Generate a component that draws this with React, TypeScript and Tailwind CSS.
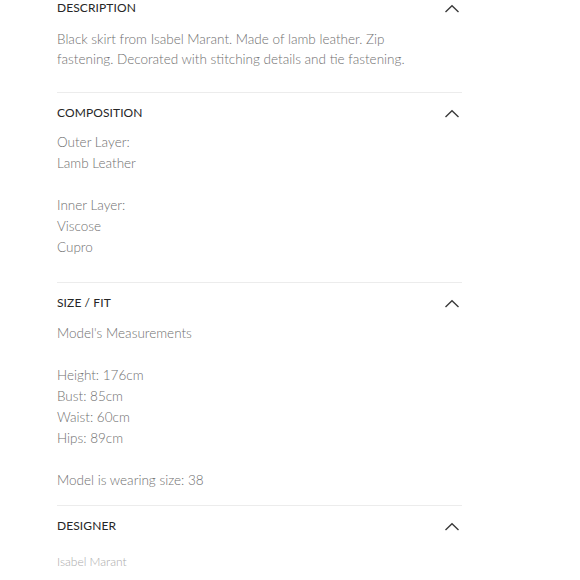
import React from "react";

function Chevron() {
  return (
    <svg width="16" height="9" viewBox="0 0 16 9" fill="none" className="shrink-0">
      <path d="M1.5 8 L8 1.8 L14.5 8" stroke="#3a3a3a" strokeWidth="1.4" />
    </svg>
  );
}

function Heading({ title }: { title: string }) {
  return (
    <div className="flex items-center justify-between h-[14px]">
      <span className="text-[12px] leading-[14px] text-[#262626] uppercase tracking-[0.1px]">{title}</span>
      <span className="mr-[2px]"><Chevron /></span>
    </div>
  );
}

export default function App() {
  return (
    <div
      className="w-[580px] h-[580px] bg-white overflow-hidden"
      style={{ fontFamily: 'Lato, "Liberation Sans", Arial, sans-serif' }}
    >
      <div className="ml-[57px] w-[405px] flex flex-col">
        <section className="pt-[1px] pb-[23px] border-b border-[#ececec]">
          <Heading title="Description" />
          <p className="mt-[14px] text-[13.5px] leading-[20px] font-light text-[#6f6f6f]">
            Black skirt from Isabel Marant. Made of lamb leather. Zip
            <br />
            fastening. Decorated with stitching details and tie fastening.
          </p>
        </section>
        <section className="pt-[13px] pb-[24px] border-b border-[#ececec]">
          <Heading title="Composition" />
          <div className="mt-[12px] text-[13.5px] leading-[21px] font-light text-[#6f6f6f]">
            <div>Outer Layer:</div>
            <div>Lamb Leather</div>
            <div className="h-[21px]" />
            <div>Inner Layer:</div>
            <div>Viscose</div>
            <div>Cupro</div>
          </div>
        </section>
        <section className="pt-[13px] pb-[14px] border-b border-[#ececec]">
          <Heading title="Size / Fit" />
          <div className="mt-[13px] text-[13.5px] leading-[21px] font-light text-[#6f6f6f]">
            <div>Model's Measurements</div>
            <div className="h-[21px]" />
            <div>Height: 176cm</div>
            <div>Bust: 85cm</div>
            <div>Waist: 60cm</div>
            <div>Hips: 89cm</div>
            <div className="h-[21px]" />
            <div>Model is wearing size: 38</div>
          </div>
        </section>
        <section className="pt-[13px]">
          <Heading title="Designer" />
          <div className="mt-[18px] text-[12px] leading-[21px] font-light text-[#aaaaaa]">Isabel Marant</div>
        </section>
      </div>
    </div>
  );
}
